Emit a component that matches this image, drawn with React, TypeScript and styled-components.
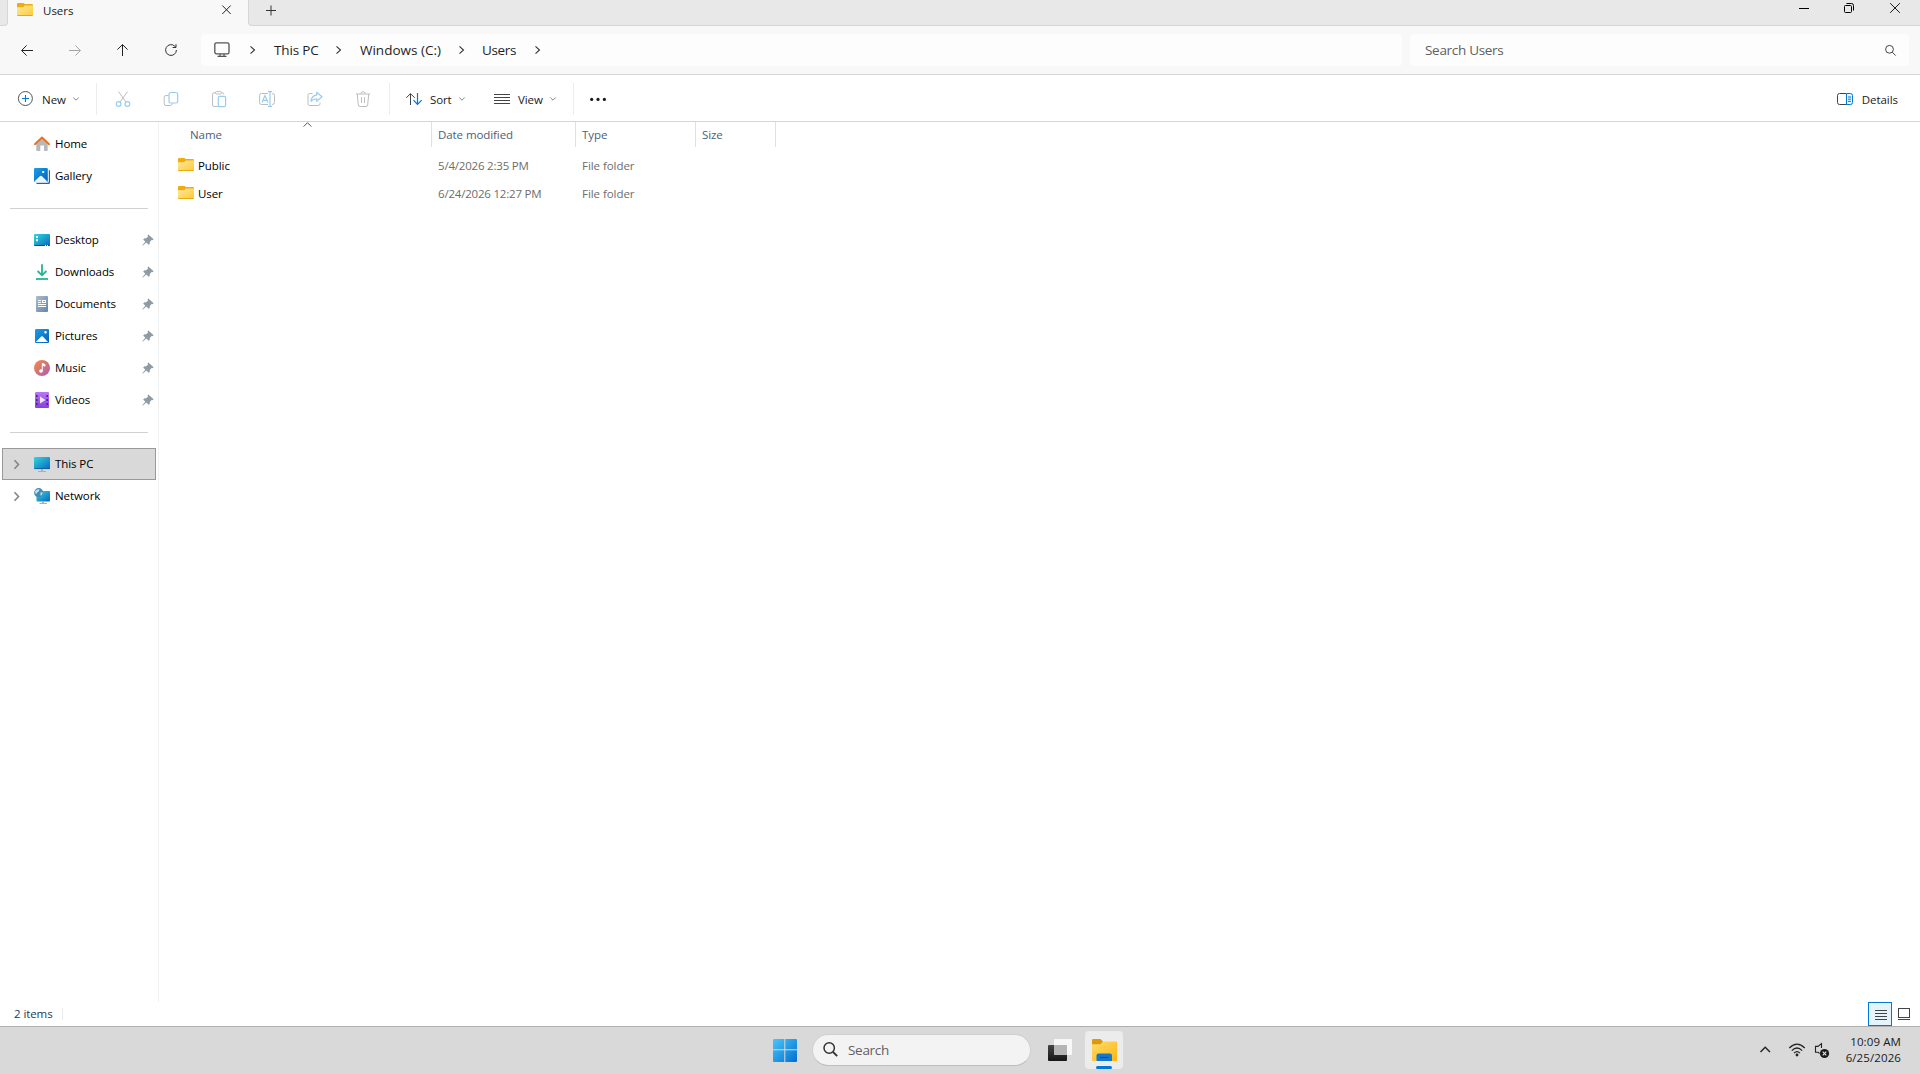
import React from "react";
import styled, { createGlobalStyle } from "styled-components";

const GlobalStyle = createGlobalStyle`
  *, *::before, *::after { box-sizing: border-box; }
  html, body { margin: 0; padding: 0; background: #fff; overflow: hidden; }
  body { font-family: "Open Sans", "Noto Sans", sans-serif; color: #1b1b1b; }
  svg { display: block; flex: none; overflow: visible; }
`;

const Screen = styled.div`
  width: 1920px;
  height: 1074px;
  display: flex;
  flex-direction: column;
  background: #fff;
`;

const Label = styled.span<{ $size?: number; $track?: number; $color?: string; $drop?: number }>`
  font-size: ${(p) => p.$size ?? 11.5}px;
  letter-spacing: ${(p) => p.$track ?? -0.08}px;
  color: ${(p) => p.$color ?? "#000"};
  line-height: 16px;
  white-space: nowrap;
  margin-top: ${(p) => p.$drop ?? 0}px;
`;

/* ---------- title bar ---------- */
const TitleBar = styled.div`
  height: 26px;
  flex: none;
  display: flex;
  background: #f8f8f8;
`;
const TabGap = styled.div`
  width: 8px;
  background: #e8e8e8;
  border: solid #d6d6d6;
  border-width: 0 1px 1px 0;
  border-bottom-right-radius: 4px;
`;
const Tab = styled.div`
  width: 240px;
  display: flex;
  padding: 3px 17px 0 9px;
`;
const TabTitle = styled.div`
  flex: 1;
  padding-left: 10px;
  display: flex;
`;
const TitleRest = styled.div`
  flex: 1;
  display: flex;
  justify-content: space-between;
  background: #e8e8e8;
  border: solid #d6d6d6;
  border-width: 0 0 1px 1px;
  border-bottom-left-radius: 4px;
  padding: 3px 20px 0 17px;
`;
const WindowButtons = styled.div`
  display: grid;
  grid-template-columns: 45px 46px 10px;
`;

/* ---------- navigation bar ---------- */
const NavBar = styled.div`
  height: 49px;
  flex: none;
  display: flex;
  align-items: center;
  background: #f8f8f8;
  border-bottom: 1px solid #d6d6d6;
  padding: 0 11px 0 3px;
`;
const NavButton = styled.div`
  width: 48px;
  display: flex;
  justify-content: center;
`;
const AddressBar = styled.div`
  width: 1201px;
  height: 32px;
  margin: 0 8px 0 6px;
  padding-left: 13px;
  display: flex;
  align-items: center;
  background: #fdfdfd;
  border-radius: 4px;
`;
const Crumb = styled.div<{ $w: number }>`
  width: ${(p) => p.$w}px;
  display: flex;
  align-items: center;
`;
const SearchBox = styled.div`
  flex: 1;
  height: 32px;
  padding: 0 13px 0 15px;
  display: flex;
  align-items: center;
  justify-content: space-between;
  background: #fdfdfd;
  border-radius: 4px;
`;

/* ---------- command bar ---------- */
const CommandBar = styled.div`
  height: 47px;
  flex: none;
  display: flex;
  align-items: center;
  border-bottom: 1px solid #d6d6d6;
  padding: 2px 22px 0 17px;
`;
const Command = styled.div<{ $w: number; $gap?: number }>`
  width: ${(p) => p.$w}px;
  display: flex;
  align-items: center;
  gap: ${(p) => p.$gap ?? 8}px;
`;
const CommandText = styled.div<{ $w: number }>`
  width: ${(p) => p.$w}px;
  display: flex;
  padding-top: 1px;
`;
const Divider = styled.div<{ $h: number; $color?: string }>`
  width: 1px;
  height: ${(p) => p.$h}px;
  flex: none;
  background: ${(p) => p.$color ?? "#ececec"};
`;
const IconGroup = styled.div`
  display: flex;
  width: 292px;
  padding-left: 2px;
`;
const IconButton = styled.div`
  width: 48px;
  display: flex;
  justify-content: center;
`;
const Spacer = styled.div`
  flex: 1;
`;

/* ---------- main area ---------- */
const Main = styled.div`
  height: 880px;
  flex: none;
  display: flex;
`;
const Sidebar = styled.div`
  width: 159px;
  border-right: 1px solid #f0f0f0;
  padding-top: 6px;
`;
const SideRow = styled.div<{ $active?: boolean }>`
  height: 32px;
  margin: 0 2px;
  padding: 0 1px 0 7px;
  border: 1px solid ${(p) => (p.$active ? "#999" : "transparent")};
  background: ${(p) => (p.$active ? "#d9d9d9" : "transparent")};
  display: flex;
  align-items: center;
`;
const ChevronSlot = styled.div`
  width: 24px;
  padding-left: 4px;
`;
const SideLabel = styled.div`
  flex: 1;
  display: flex;
  padding-left: 5px;
`;
const SideRule = styled.div`
  height: 32px;
  margin: 0 10px;
  display: flex;
  align-items: center;
  &::after {
    content: "";
    flex: 1;
    height: 1px;
    margin-top: 1px;
    background: #d2d2d2;
  }
`;
const FileArea = styled.div`
  flex: 1;
`;
const ColumnHeads = styled.div`
  height: 25px;
  display: flex;
  align-items: center;
  position: relative;
`;
const ColumnHead = styled.div<{ $w: number; $pad: number }>`
  width: ${(p) => p.$w}px;
  height: 25px;
  padding-left: ${(p) => p.$pad}px;
  display: flex;
  align-items: center;
  border-right: 1px solid #e0e0e0;
`;
const SortMark = styled.div`
  position: absolute;
  left: 144px;
  top: 0;
`;
const FileList = styled.div`
  padding-top: 4px;
`;
const FileRow = styled.div`
  height: 28px;
  display: grid;
  grid-template-columns: 279px 144px 120px;
  align-items: center;
`;
const FileName = styled.div`
  display: flex;
  align-items: center;
  gap: 4px;
  padding-left: 19px;
`;

/* ---------- status bar ---------- */
const StatusBar = styled.div`
  height: 24px;
  flex: none;
  display: flex;
  align-items: center;
  padding: 0 10px 0 14px;
`;
const ItemCount = styled.div`
  width: 48px;
  display: flex;
`;
const ViewButton = styled.div`
  width: 24px;
  height: 24px;
  margin-right: 6px;
  display: flex;
  align-items: center;
  justify-content: center;
  padding: 2px 0 0 1px;
  background: #e5f3fb;
  border: 1px solid #0078d7;
`;

/* ---------- task bar ---------- */
const TaskBar = styled.div`
  height: 48px;
  flex: none;
  display: flex;
  align-items: center;
  background: #d9d9d9;
  border-top: 1px solid #b0b0b0;
  padding: 0 19px 1px 773px;
`;
const TaskSearch = styled.div`
  width: 219px;
  height: 32px;
  margin: 0 17px 0 15px;
  padding: 0 0 1px 10px;
  display: flex;
  align-items: center;
  gap: 10px;
  border-radius: 16px;
  background: #f3f3f3;
  border: 1px solid #cfcfcf;
  border-bottom-color: #bdbdbd;
`;
const TaskTile = styled.div`
  width: 38px;
  height: 38px;
  margin-left: 13px;
  display: flex;
  flex-direction: column;
  align-items: center;
  justify-content: space-between;
  padding-top: 8px;
  border-radius: 4px;
  background: #ececec;
`;
const RunningMark = styled.div`
  width: 16px;
  height: 3px;
  border-radius: 2px;
  background: #0078d7;
`;
const Clock = styled.div`
  width: 72px;
  display: flex;
  flex-direction: column;
  align-items: flex-end;
  padding-bottom: 1px;
`;

/* ---------- icons ---------- */
const Folder = () => (
  <svg width="16" height="14" viewBox="0 0 16 14">
    <defs>
      <linearGradient id="fold" x1="0" y1="0" x2="1" y2="1">
        <stop offset="0" stopColor="#ffe9a0" />
        <stop offset="1" stopColor="#fdc935" />
      </linearGradient>
    </defs>
    <path d="M0 1.2Q0 0 1.2 0H6.4L7.8 1H14.8Q16 1 16 2.2V6H0Z" fill="#f2ab0e" />
    <path d="M0 4.2H6.2L7.9 2.6H16V11.8Q16 13 14.8 13H1.2Q0 13 0 11.8Z" fill="url(#fold)" />
    <path d="M.4 12.5H15.6" stroke="#e9a80d" fill="none" strokeWidth="1" />
  </svg>
);

const Cross = ({ s, w = 1 }: { s: number; w?: number }) => (
  <svg width={s} height={s} viewBox={`0 0 ${s} ${s}`}>
    <path d={`M.2 .2L${s - 0.2} ${s - 0.2}M${s - 0.2} .2L.2 ${s - 0.2}`} stroke="#1a1a1a" strokeWidth={w} fill="none" />
  </svg>
);

const Chevron = ({ w = 5, h = 8, color = "#333", sw = 1.1 }: { w?: number; h?: number; color?: string; sw?: number }) => (
  <svg width={w} height={h} viewBox={`0 0 ${w} ${h}`}>
    <path d={`M.5 .3L${w - 0.5} ${h / 2}L.5 ${h - 0.3}`} stroke={color} strokeWidth={sw} fill="none" />
  </svg>
);

const DownMark = () => (
  <svg width="6" height="4" viewBox="0 0 6 4">
    <path d="M.3 .5L3 3.2L5.7 .5" stroke="#888" fill="none" />
  </svg>
);

const GRAY = "#bdbdbd";
const BLUE = "#99cdf0";

const commandIcons: { name: string; art: React.ReactNode }[] = [
  {
    name: "cut",
    art: (
      <>
        <path d="M3.5 .5L10.8 11M12.5 .5L5.2 11" stroke={GRAY} />
        <circle cx="3.6" cy="13" r="2.4" stroke={BLUE} strokeWidth="1.2" />
        <circle cx="12.4" cy="13" r="2.4" stroke={BLUE} strokeWidth="1.2" />
      </>
    ),
  },
  {
    name: "copy",
    art: (
      <>
        <path d="M5.5 4.5H3Q1.2 4.5 1.2 6.3V12.7Q1.2 14.5 3 14.5H7.2Q9 14.5 9.4 12.3" stroke={GRAY} />
        <rect x="6" y="1.5" width="8.7" height="10.5" rx="1.8" stroke={BLUE} strokeWidth="1.2" />
      </>
    ),
  },
  {
    name: "paste",
    art: (
      <>
        <path d="M7 15.5H3Q1.5 15.5 1.5 14V3.3Q1.5 1.8 3 1.8H4.5M10.5 1.8H11.5Q12.8 1.8 12.9 3.5" stroke={GRAY} />
        <rect x="4.4" y=".6" width="6.2" height="2.4" rx="1.2" stroke={GRAY} />
        <rect x="7.3" y="5.3" width="7.3" height="10.4" rx="1.4" stroke={BLUE} strokeWidth="1.2" />
      </>
    ),
  },
  {
    name: "rename",
    art: (
      <>
        <path d="M9 2.5H2.5Q.6 2.5 .6 4.4V11.6Q.6 13.5 2.5 13.5H9M13 2.5Q15.5 2.5 15.5 4.4V11.6Q15.5 13.5 13 13.5" stroke={GRAY} />
        <path d="M3 11.5L6 4.5L9 11.5M4 9.3H8M11 1V15M9 .7H13M9 15.4H13" stroke={BLUE} strokeWidth="1.2" />
      </>
    ),
  },
  {
    name: "share",
    art: (
      <>
        <path d="M5.5 2.5H2.8Q1 2.5 1 4.3V12.7Q1 14.5 2.8 14.5H11.2Q13 14.5 13 12.7V11.5" stroke={GRAY} />
        <path d="M9.7 1.2L15 5.7L9.7 10.3V7.8Q6.3 7.6 4 10.4Q4.4 4.6 9.7 3.8Z" stroke={BLUE} strokeWidth="1.2" strokeLinejoin="round" />
      </>
    ),
  },
  {
    name: "delete",
    art: (
      <>
        <path d="M.8 3H15.2M5.8 2.8Q6 .7 8 .7Q10 .7 10.2 2.8M2.3 3.2L3.3 14Q3.5 15.5 5 15.5H11Q12.5 15.5 12.7 14L13.7 3.2M6.5 6.2V12M9.5 6.2V12" stroke={GRAY} />
      </>
    ),
  },
];

const Pin = () => (
  <svg width="12" height="12" viewBox="0 0 12 12">
    <path d="M6.4 .4L11.6 5.3L10.6 6.2L9.6 6L7.8 8L7.7 10L6.7 10.8L4.3 8.5L.9 11.6L.4 11.1L3.4 7.7L1.2 5.4L2.1 4.4L4.3 4.3L6 2.5L5.6 1.4Z" fill="#8f9aa2" />
  </svg>
);

const sideArt: Record<string, React.ReactNode> = {
  Home: (
    <>
      <path d="M2.3 7L8 2.2L13.7 7V14.2Q13.7 15 12.9 15H10V9.6H6.3V15H3.1Q2.3 15 2.3 14.2Z" fill="#b9b9b9" />
      <path d="M.9 8.2L8 1.5L15.1 8.2" fill="none" stroke="#e8721c" strokeWidth="1.9" strokeLinecap="round" strokeLinejoin="round" />
    </>
  ),
  Gallery: (
    <>
      <path d="M14.8 2H15Q16 2 16 3V14.5Q16 16 14.5 16H3Q2.2 16 2.2 14.8H13.5Q14.8 14.8 14.8 13.5Z" fill="#0f6cbd" />
      <rect x="0" y="0" width="13.8" height="14" rx="1.2" fill="url(#blueSky)" />
      <path d="M.6 13.3L5.8 8.2Q6.9 7.2 8 8.2L13.2 13.3Q12.8 14 12 14H2Q1 14 .6 13.3Z" fill="#eaf6ff" />
      <rect x="8.2" y="3" width="2" height="2" rx=".5" fill="#fff" />
    </>
  ),
  Desktop: (
    <>
      <rect x="0" y="2" width="16" height="12" rx="1" fill="url(#teal)" />
      <path d="M2 4h2v2H2zM2 7.3h2v2H2z" fill="#fff" />
      <path d="M.4 13.5H15.6" stroke="#0a4a86" />
      <path d="M11 13.5h1M13 13.5h1" stroke="#fff" />
    </>
  ),
  Downloads: (
    <>
      <path d="M8 .2V11M3.6 7L8 11.3L12.4 7" fill="none" stroke="#23b492" strokeWidth="1.8" />
      <path d="M2 15H14" stroke="#23b492" strokeWidth="1.8" />
    </>
  ),
  Documents: (
    <>
      <rect x="2" y="0" width="12" height="16" rx="1" fill="url(#doc)" />
      <path d="M4 4.5H7M4 6.5H7M4 8.5H12M4 10.5H12" stroke="#fff" />
      <rect x="8.5" y="4.5" width="3" height="2" fill="none" stroke="#fff" />
    </>
  ),
  Pictures: (
    <>
      <rect x="1" y="1" width="14" height="14" rx="1" fill="url(#blueSky)" />
      <path d="M1.8 14L7.2 8.6Q8 7.9 8.8 8.6L14 14Z" fill="#fff" />
      <rect x="10.3" y="3" width="2.4" height="2.4" rx="1" fill="#fff" />
    </>
  ),
  Music: (
    <>
      <circle cx="8" cy="8" r="8" fill="url(#music)" />
      <ellipse cx="7" cy="11" rx="1.9" ry="1.8" fill="#fff" />
      <path d="M8.3 11V3.3L11 4.5V6.2L8.9 5.3" fill="#fff" stroke="#fff" strokeWidth=".9" />
    </>
  ),
  Videos: (
    <>
      <rect x="1" y="0" width="14" height="16" rx="1" fill="url(#video)" />
      <path d="M2 3h1.6v2H2zM2 7h1.6v2H2zM2 11h1.6v2H2zM12.4 3H14v2h-1.6zM12.4 7H14v2h-1.6zM12.4 11H14v2h-1.6z" fill="#4c2496" />
      <path d="M6 4.6L11.6 8L6 11.4Z" fill="#f0e6ff" />
    </>
  ),
  "This PC": (
    <>
      <rect x="0" y="1" width="16" height="12" rx=".8" fill="url(#teal)" />
      <path d="M.3 12.6H15.7" stroke="#0b5a9c" strokeWidth=".8" />
      <path d="M7 13h2v2h3v1H4v-1h3z" fill="#a8b0b5" />
    </>
  ),
  Network: (
    <>
      <rect x="2.5" y="3" width="13.5" height="10.4" rx=".8" fill="url(#teal)" />
      <path d="M8 13.4h2v1.6h3v1H5.5v-1H8z" fill="#a8b0b5" />
      <circle cx="4.7" cy="4.7" r="4.6" fill="#3f8fb8" />
      <path d="M1 3.2Q3 .7 5.5 1.4Q5.3 3.6 3.4 4.2Q3 6 1.6 6ZM6.5 4.5L8.8 4.2Q8.3 7 6.6 7.7Z" fill="#c4e4ee" />
    </>
  ),
};

const PaintStore = styled.svg`
  position: absolute;
`;

const SharedPaints = () => (
  <PaintStore width="0" height="0">
    <defs>
      <linearGradient id="blueSky" x1="0" y1="0" x2="1" y2="1">
        <stop offset="0" stopColor="#1a9fe8" />
        <stop offset="1" stopColor="#0560b6" />
      </linearGradient>
      <linearGradient id="teal" x1="0" y1="0" x2="1" y2="1">
        <stop offset="0" stopColor="#31d8dc" />
        <stop offset="1" stopColor="#0b66c0" />
      </linearGradient>
      <linearGradient id="doc" x1="0" y1="0" x2="1" y2="1">
        <stop offset="0" stopColor="#a9bdd2" />
        <stop offset="1" stopColor="#6485a6" />
      </linearGradient>
      <linearGradient id="music" x1="0" y1="0" x2="1" y2="1">
        <stop offset=".1" stopColor="#f0864e" />
        <stop offset="1" stopColor="#ab5cb4" />
      </linearGradient>
      <linearGradient id="video" x1="0" y1="0" x2="0" y2="1">
        <stop offset="0" stopColor="#b878f4" />
        <stop offset="1" stopColor="#8a3fe0" />
      </linearGradient>
      <linearGradient id="win" gradientUnits="userSpaceOnUse" x1="0" y1="0" x2="24" y2="24">
        <stop offset="0" stopColor="#4cc8fb" />
        <stop offset="1" stopColor="#006fd0" />
      </linearGradient>
      <linearGradient id="bigFold" x1="0" y1="0" x2="1" y2="1">
        <stop offset="0" stopColor="#ffdc6b" />
        <stop offset="1" stopColor="#fbb612" />
      </linearGradient>
      <linearGradient id="dark" x1="0" y1="0" x2="0" y2="1">
        <stop offset="0" stopColor="#444" />
        <stop offset="1" stopColor="#151515" />
      </linearGradient>
    </defs>
  </PaintStore>
);

const SideItem = ({ name, pinned, expandable, active }: { name: string; pinned?: boolean; expandable?: boolean; active?: boolean }) => (
  <SideRow $active={active}>
    <ChevronSlot>{expandable && <Chevron w={5} h={9} color="#858585" sw={1.6} />}</ChevronSlot>
    <svg width="16" height="16" viewBox="0 0 16 16">{sideArt[name]}</svg>
    <SideLabel>
      <Label>{name}</Label>
    </SideLabel>
    {pinned && <Pin />}
  </SideRow>
);

const files = [
  { name: "Public", date: "5/4/2026 2:35 PM", type: "File folder" },
  { name: "User", date: "6/24/2026 12:27 PM", type: "File folder" },
];

const pinnedPlaces = ["Desktop", "Downloads", "Documents", "Pictures", "Music", "Videos"];

export default function App() {
  return (
    <Screen>
      <GlobalStyle />
      <SharedPaints />

      <TitleBar>
        <TabGap />
        <Tab>
          <Folder />
          <TabTitle>
            <Label $color="#1a1a1a" $track={0}>Users</Label>
          </TabTitle>
          <svg width="9" height="13" viewBox="0 0 9 13">
            <path d="M.3 2.5L8.7 11M8.7 2.5L.3 11" stroke="#222" fill="none" />
          </svg>
        </Tab>
        <TitleRest>
          <svg width="10" height="15" viewBox="0 0 10 15">
            <path d="M0 7.5H10M5 2.5V12.5" stroke="#333" />
          </svg>
          <WindowButtons>
            <svg width="10" height="10" viewBox="0 0 10 10">
              <path d="M0 5.5H10" stroke="#000" />
            </svg>
            <svg width="10" height="10" viewBox="0 0 10 10">
              <rect x=".5" y="2.5" width="7" height="7" rx="1" fill="none" stroke="#000" />
              <path d="M2.5 .5H7.5Q9.5 .5 9.5 2.5V7.5" fill="none" stroke="#000" />
            </svg>
            <Cross s={10} />
          </WindowButtons>
        </TitleRest>
      </TitleBar>

      <NavBar>
        <NavButton>
          <svg width="12" height="11" viewBox="0 0 12 11">
            <path d="M12 5.5H.7M5.6 .4L.6 5.5L5.6 10.6" stroke="#222" fill="none" />
          </svg>
        </NavButton>
        <NavButton>
          <svg width="12" height="11" viewBox="0 0 12 11">
            <path d="M0 5.5H11.3M6.4 .4L11.4 5.5L6.4 10.6" stroke="#a5a5a5" fill="none" />
          </svg>
        </NavButton>
        <NavButton>
          <svg width="12" height="12" viewBox="0 0 12 12">
            <path d="M5.5 12V.7M.4 5.6L5.5 .6L10.6 5.6" stroke="#222" fill="none" />
          </svg>
        </NavButton>
        <NavButton>
          <svg width="12" height="12" viewBox="0 0 12 12">
            <path d="M11.4 6A5.4 5.4 0 1 1 9.7 2.1L11 3.4M11 .2V3.5H7.6" stroke="#333" fill="none" />
          </svg>
        </NavButton>
        <AddressBar>
          <Crumb $w={36}>
            <svg width="16" height="16" viewBox="0 0 16 16">
              <rect x=".8" y=".8" width="14.2" height="11" rx="1.6" fill="none" stroke="#555" strokeWidth="1.3" />
              <path d="M6 12V14M10 12V14M3.5 14.4H12.5" stroke="#555" strokeWidth="1.2" />
            </svg>
          </Crumb>
          <Crumb $w={24}><Chevron /></Crumb>
          <Crumb $w={62}><Label $size={13.5} $track={-0.15} $color="#1f1f1f">This PC</Label></Crumb>
          <Crumb $w={24}><Chevron /></Crumb>
          <Crumb $w={99}><Label $size={13.5} $track={0} $color="#1f1f1f">Windows (C:)</Label></Crumb>
          <Crumb $w={23}><Chevron /></Crumb>
          <Crumb $w={53}><Label $size={13.5} $track={-0.35} $color="#1f1f1f">Users</Label></Crumb>
          <Chevron />
        </AddressBar>
        <SearchBox>
          <Label $size={13.5} $track={-0.3} $color="#606060">Search Users</Label>
          <svg width="11" height="11" viewBox="0 0 11 11">
            <circle cx="4.5" cy="4.3" r="3.9" fill="none" stroke="#444" />
            <path d="M7.3 7.2L10.7 10.6" stroke="#444" />
          </svg>
        </SearchBox>
      </NavBar>

      <CommandBar>
        <Command $w={79} $gap={0}>
          <svg width="16" height="16" viewBox="0 0 16 16">
            <circle cx="8.4" cy="7.5" r="7" fill="none" stroke="#555" />
            <path d="M8.5 4V11M5 7.5H12" stroke="#0078d4" strokeWidth="1.1" />
          </svg>
          <Spacer />
          <CommandText $w={31}><Label $color="#1a1a1a" $track={0}>New</Label></CommandText>
          <Command $w={23}><DownMark /></Command>
        </Command>
        <Divider $h={32} />
        <IconGroup>
          {commandIcons.map((icon) => (
            <IconButton key={icon.name}>
              <svg width="16" height="16" viewBox="0 0 16 16" fill="none">{icon.art}</svg>
            </IconButton>
          ))}
        </IconGroup>
        <Divider $h={32} />
        <Command $w={103}>
          <Spacer />
          <svg width="16" height="12" viewBox="0 0 16 12">
            <path d="M4.5 12V.8M.3 4.8L4.5 .6L8.7 4.8" stroke="#444" fill="none" />
            <path d="M11.5 0V11.2M7.5 7.2L11.5 11.4L15.7 7.2" stroke="#0078d4" strokeWidth="1.2" fill="none" />
          </svg>
          <CommandText $w={21}><Label $color="#1a1a1a" $track={-0.1}>Sort</Label></CommandText>
          <DownMark />
          <CommandText $w={20} />
        </Command>
        <Command $w={80}>
          <svg width="17" height="10" viewBox="0 0 17 10">
            <path d="M1 .5H17M1 3.5H17M1 6.5H17M1 9.5H17" stroke="#444" />
          </svg>
          <CommandText $w={24}><Label $color="#1a1a1a" $track={-0.1}>View</Label></CommandText>
          <DownMark />
        </Command>
        <Divider $h={32} />
        <Command $w={40}>
          <Spacer />
          <svg width="24" height="4" viewBox="0 0 24 4">
            <circle cx="1.7" cy="2.4" r="1.6" fill="#1a1a1a" />
            <circle cx="8" cy="2.4" r="1.6" fill="#1a1a1a" />
            <circle cx="14.4" cy="2.4" r="1.6" fill="#1a1a1a" />
          </svg>
        </Command>
        <Spacer />
        <svg width="16" height="12" viewBox="0 0 16 12">
          <path d="M9.5 .5H2.5Q.5 .5 .5 2.5V9.5Q.5 11.5 2.5 11.5H9.5" stroke="#444" fill="none" />
          <path d="M9.5 .5H13.5Q15.5 .5 15.5 2.5V9.5Q15.5 11.5 13.5 11.5H9.5ZM11 4H14M11 6.2H14M11 8.4H14" stroke="#0078d4" fill="#e8f4fc" />
        </svg>
        <CommandText $w={45}>
          <Spacer />
          <Label $color="#1a1a1a" $track={-0.05}>Details</Label>
        </CommandText>
      </CommandBar>

      <Main>
        <Sidebar>
          <SideItem name="Home" />
          <SideItem name="Gallery" />
          <SideRule />
          {pinnedPlaces.map((name) => (
            <SideItem key={name} name={name} pinned />
          ))}
          <SideRule />
          <SideItem name="This PC" expandable active />
          <SideItem name="Network" expandable />
        </Sidebar>
        <FileArea>
          <ColumnHeads>
            <ColumnHead $w={273} $pad={31}><Label $color="#4c607a">Name</Label></ColumnHead>
            <ColumnHead $w={144} $pad={6}><Label $color="#4c607a">Date modified</Label></ColumnHead>
            <ColumnHead $w={120} $pad={6}><Label $color="#4c607a">Type</Label></ColumnHead>
            <ColumnHead $w={80} $pad={6}><Label $color="#4c607a">Size</Label></ColumnHead>
            <SortMark>
              <svg width="9" height="5" viewBox="0 0 9 5">
                <path d="M.6 4.6L4.5 .7L8.4 4.6" stroke="#555" fill="none" />
              </svg>
            </SortMark>
          </ColumnHeads>
          <FileList>
            {files.map((file) => (
              <FileRow key={file.name}>
                <FileName>
                  <Folder />
                  <Label $drop={2}>{file.name}</Label>
                </FileName>
                <Label $color="#6d6d6d" $track={-0.2} $drop={2}>{file.date}</Label>
                <Label $color="#6d6d6d" $track={-0.05} $drop={2}>{file.type}</Label>
              </FileRow>
            ))}
          </FileList>
        </FileArea>
      </Main>

      <StatusBar>
        <ItemCount><Label $color="#1e395b">2 items</Label></ItemCount>
        <Divider $h={12} />
        <Spacer />
        <ViewButton>
          <svg width="12" height="10" viewBox="0 0 12 10">
            <path d="M0 .5H12M0 3.5H12M0 6.5H12M0 9.5H12" stroke="#444" />
          </svg>
        </ViewButton>
        <svg width="12" height="12" viewBox="0 0 12 12">
          <rect x=".5" y=".5" width="11" height="9" fill="none" stroke="#444" />
          <path d="M0 11.5H12" stroke="#444" />
        </svg>
      </StatusBar>

      <TaskBar>
        <svg width="24" height="24" viewBox="0 0 24 24">
          <path d="M1 1H11.3V11.3H0V2Q0 1 1 1ZM12.3 1H23Q24 1 24 2V11.3H12.3ZM0 12.3H11.3V24H1Q0 24 0 23ZM12.3 12.3H24V23Q24 24 23 24H12.3Z" fill="url(#win)" />
        </svg>
        <TaskSearch>
          <svg width="15" height="15" viewBox="0 0 15 15">
            <circle cx="6.2" cy="6" r="5.2" fill="none" stroke="#333" strokeWidth="1.5" />
            <path d="M10 10L14.2 14.2" stroke="#333" strokeWidth="1.8" />
          </svg>
          <Label $size={13.5} $track={-0.3} $color="#606060">Search</Label>
        </TaskSearch>
        <svg width="24" height="22" viewBox="0 0 24 22">
          <rect x="0" y="6" width="19" height="16" rx="1" fill="url(#dark)" />
          <rect x="6" y="0" width="18" height="16" rx="1" fill="#fff" opacity=".78" />
          <path d="M6 6H19V16H7Q6 16 6 15Z" fill="#b5b5b5" />
        </svg>
        <TaskTile>
          <svg width="25" height="22" viewBox="0 0 25 22">
            <path d="M0 1.2Q0 0 1.2 0H8.6L11 2.5V7H0Z" fill="#dc9a0b" />
            <path d="M0 5.2H8.5L11 2.4H23.8Q25 2.4 25 3.6V22H0Z" fill="url(#bigFold)" />
            <path d="M4.5 22V16.6Q4.5 14.5 6.6 14.5H17.9Q20 14.5 20 16.6V22Z" fill="#1277cf" />
            <path d="M8 18.5H16.5" stroke="#0a5098" strokeWidth="1.2" />
          </svg>
          <RunningMark />
        </TaskTile>
        <Spacer />
        <svg width="69" height="16" viewBox="0 0 69 16">
          <path d="M.5 10L5.2 5.2L10 10" stroke="#222" strokeWidth="1.4" fill="none" />
          <path d="M29.3 6Q37 -1.6 44.8 6M31.8 8.6Q37 3.4 42.2 8.6M34 11.1Q37 8.2 40 11.1" stroke="#222" strokeWidth="1.2" fill="none" />
          <circle cx="37" cy="13" r="1.4" fill="#222" />
          <path d="M61.5 6V1.6L58 4.4H55.5V10.2H58L59.5 11.5" stroke="#222" strokeWidth="1.1" fill="none" />
          <circle cx="64.5" cy="11.5" r="4.6" fill="#1a1a1a" />
          <path d="M62.7 9.7L66.3 13.3M66.3 9.7L62.7 13.3" stroke="#e8e8e8" strokeWidth="1.1" />
        </svg>
        <Clock>
          <Label $color="#1a1a1a" $track={0.1}>10:09 AM</Label>
          <Label $color="#1a1a1a" $track={0.1}>6/25/2026</Label>
        </Clock>
      </TaskBar>
    </Screen>
  );
}
